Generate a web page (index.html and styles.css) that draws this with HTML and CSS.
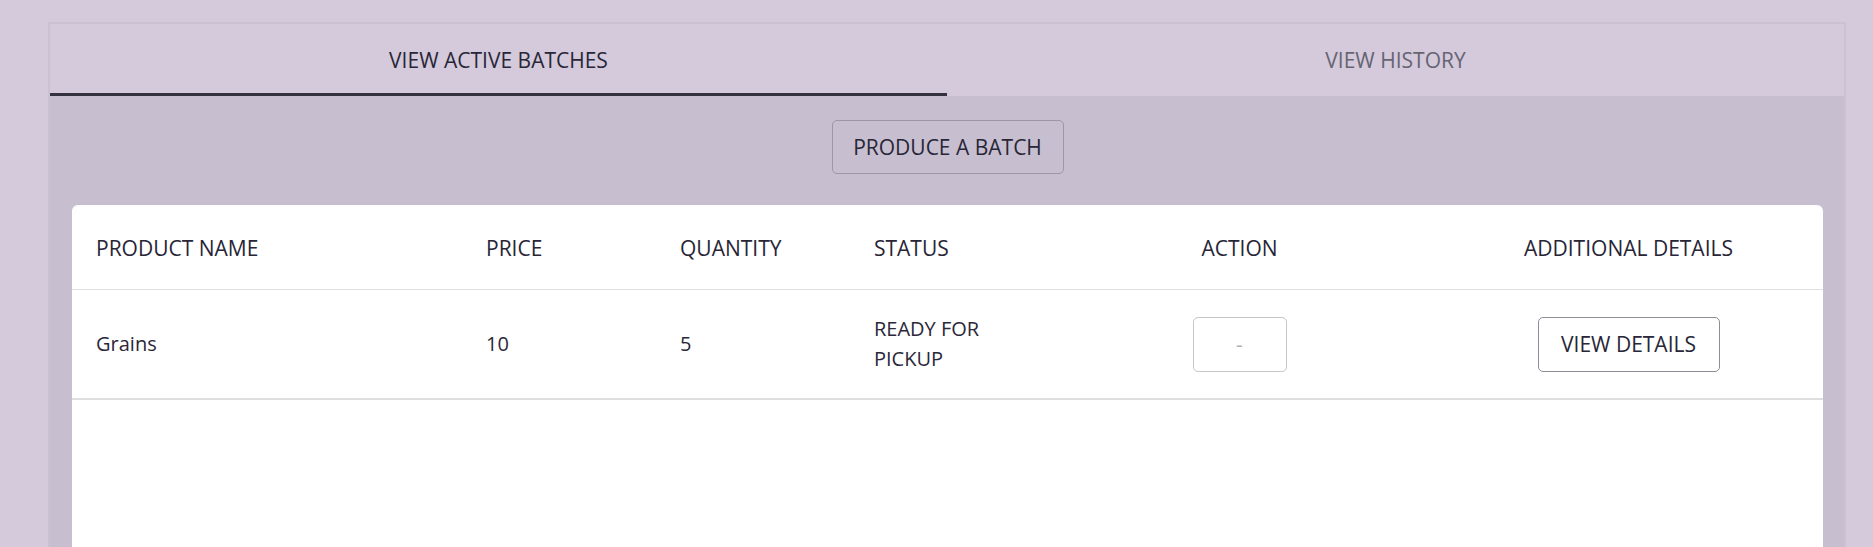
FILE: index.html
```html
<!DOCTYPE html>
<html>
<head>
<meta charset="utf-8">
<link rel="stylesheet" href="styles.css">
</head>
<body>
<div class="panel">
  <div class="tabs">
    <div class="tab active">VIEW ACTIVE BATCHES</div>
    <div class="tab">VIEW HISTORY</div>
  </div>
  <div class="content">
    <div class="actions">
      <button class="btn produce">PRODUCE A BATCH</button>
    </div>
    <div class="table-card">
      <table class="batches">
        <colgroup>
          <col class="c-name"><col class="c-price"><col class="c-qty"><col class="c-status"><col class="c-action"><col class="c-details">
        </colgroup>
        <thead>
          <tr>
            <th>PRODUCT NAME</th>
            <th>PRICE</th>
            <th>QUANTITY</th>
            <th>STATUS</th>
            <th class="center">ACTION</th>
            <th class="center">ADDITIONAL DETAILS</th>
          </tr>
        </thead>
        <tbody>
          <tr>
            <td>Grains</td>
            <td>10</td>
            <td>5</td>
            <td>READY FOR PICKUP</td>
            <td class="center"><button class="btn dash" disabled>-</button></td>
            <td class="center"><button class="btn details">VIEW DETAILS</button></td>
          </tr>
        </tbody>
      </table>
    </div>
  </div>
</div>
</body>
</html>
```

FILE: styles.css
```css
html, body {
  margin: 0;
  padding: 0;
}
body {
  background: #d4cadc;
  font-family: "Open Sans", "Noto Sans", sans-serif;
  color: #2a2839;
  padding: 22px 27px 0 48px;
  height: 547px;
  box-sizing: border-box;
  overflow: hidden;
}
.panel {
  border: 2px solid #cbc1d3;
  border-bottom: none;
  background: #c7bfd0;
  height: 600px;
}
.tabs {
  display: flex;
  background: #d4cadc;
  height: 72px;
}
.tab {
  flex: 1;
  display: flex;
  align-items: center;
  justify-content: center;
  font-size: 21px;
  font-weight: 500;
  color: #666472;
  border-bottom: 3px solid transparent;
  box-sizing: border-box;
  padding-top: 3px;
}
.tab.active {
  color: #282637;
  border-bottom-color: #34323e;
}
.content {
  padding: 24px 21px 0 22px;
}
.actions {
  display: flex;
  justify-content: center;
}
.btn {
  font-family: "Open Sans", "Noto Sans", sans-serif;
  font-size: 21px;
  font-weight: 500;
  background: transparent;
  color: #282637;
  border-radius: 5px;
  cursor: pointer;
  box-sizing: border-box;
}
.produce {
  width: 232px;
  height: 54px;
  border: 1px solid #9d96a6;
  padding: 0;
}
.table-card {
  margin-top: 31px;
  background: #ffffff;
  border-radius: 6px 6px 0 0;
  height: 400px;
}
.batches {
  width: 100%;
  border-collapse: collapse;
  table-layout: fixed;
}
.c-name { width: 390px; }
.c-price { width: 194px; }
.c-qty { width: 194px; }
.c-status { width: 195px; }
.c-action { width: 389px; }
.c-details { width: 389px; }
.batches th {
  text-align: left;
  font-size: 21px;
  font-weight: 500;
  line-height: 28px;
  padding: 29px 24px 27px;
  border-bottom: 1px solid #e0e0e0;
  color: #272536;
}
.batches td {
  font-size: 20px;
  font-weight: 400;
  line-height: 30px;
  padding: 24px 24px;
  border-bottom: 2px solid #dedede;
  color: #2a2839;
  vertical-align: middle;
}
.batches .center {
  text-align: center;
}
.dash {
  width: 94px;
  height: 55px;
  border: 1px solid #c6c6c6;
  color: #b3b3b3;
  font-weight: 400;
  padding: 0;
  vertical-align: middle;
}
.details {
  width: 182px;
  height: 55px;
  border: 1px solid #8f8b97;
  padding: 0;
  vertical-align: middle;
}
```
